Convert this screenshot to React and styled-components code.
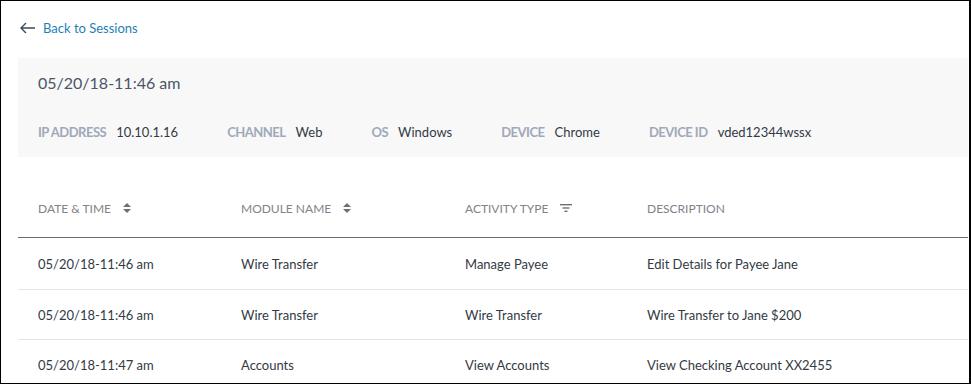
import styled, { createGlobalStyle } from 'styled-components'

const GlobalStyle = createGlobalStyle`
    body {
        margin: 0;
        background: #fff;
        font-family: Lato, "Open Sans", sans-serif;
    }
`

const info = [
    { label: 'IP ADDRESS', value: '10.10.1.16' },
    { label: 'CHANNEL', value: 'Web' },
    { label: 'OS', value: 'Windows' },
    { label: 'DEVICE', value: 'Chrome' },
    { label: 'DEVICE ID', value: 'vded12344wssx' },
]

const columns = [
    { title: 'DATE & TIME', icon: 'sort' },
    { title: 'MODULE NAME', icon: 'sort' },
    { title: 'ACTIVITY TYPE', icon: 'filter' },
    { title: 'DESCRIPTION' },
]

const rows = [
    ['05/20/18-11:46 am', 'Wire Transfer', 'Manage Payee', 'Edit Details for Payee Jane'],
    ['05/20/18-11:46 am', 'Wire Transfer', 'Wire Transfer', 'Wire Transfer to Jane $200'],
    ['05/20/18-11:47 am', 'Accounts', 'View Accounts', 'View Checking Account XX2455'],
]

const SortIcon = () => (
    <svg width="8" height="10" viewBox="0 0 8 10">
        <path d="M4 0 L8 4 H0 Z" fill="#6b6f76" />
        <path d="M0 6 H8 L4 10 Z" fill="#6b6f76" />
    </svg>
)

const FilterIcon = () => (
    <svg width="12" height="8" viewBox="0 0 12 8">
        <rect x="0" y="0" width="12" height="1.4" fill="#6b6f76" />
        <rect x="2.5" y="3.3" width="7" height="1.4" fill="#6b6f76" />
        <rect x="4.5" y="6.6" width="3" height="1.4" fill="#6b6f76" />
    </svg>
)

const BackArrow = () => (
    <svg width="16" height="12" viewBox="0 0 16 12">
        <path d="M6 1 L1 6 L6 11 M1 6 H15" fill="none" stroke="#3d4b5c" strokeWidth="1.4" />
    </svg>
)

const App = () => {
    return (
        <Frame>
            <GlobalStyle />
            <BackLink>
                <BackArrow />
                <span>Back to Sessions</span>
            </BackLink>
            <Panel>
                <SessionTitle>05/20/18-11:46 am</SessionTitle>
                <InfoRow>
                    {info.map(i => (
                        <InfoItem key={i.label}>
                            <InfoLabel>{i.label}</InfoLabel>
                            <InfoValue>{i.value}</InfoValue>
                        </InfoItem>
                    ))}
                </InfoRow>
            </Panel>
            <Table>
                <HeadRow>
                    {columns.map(c => (
                        <HeadCell key={c.title}>
                            {c.title}
                            {c.icon === 'sort' && <SortIcon />}
                            {c.icon === 'filter' && <FilterIcon />}
                        </HeadCell>
                    ))}
                </HeadRow>
                {rows.map((r, i) => (
                    <Row key={i}>
                        {r.map((cell, j) => <Cell key={j}>{cell}</Cell>)}
                    </Row>
                ))}
            </Table>
        </Frame>
    )
}

const Frame = styled.div`
    width: 971px;
    height: 384px;
    box-sizing: border-box;
    border: 1px solid #000;
    border-right-width: 2px;
    padding: 0 1px 0 17px;
    overflow: hidden;
`

const BackLink = styled.a`
    display: flex;
    align-items: center;
    gap: 7px;
    height: 53px;
    margin-bottom: 4px;
    padding-left: 2px;
    color: #1f7fb3;
    font-size: 13px;
    cursor: pointer;
    svg {
        margin-top: 1px;
    }
`

const Panel = styled.div`
    background: #f8f8f9;
    height: 99px;
    padding: 0 20px;
    box-sizing: border-box;
    display: flex;
    flex-direction: column;
`

const SessionTitle = styled.div`
    font-size: 16px;
    color: #4a5566;
    height: 48px;
    display: flex;
    align-items: center;
`

const InfoRow = styled.div`
    display: flex;
    gap: 49px;
    height: 51px;
    align-items: center;
`

const InfoItem = styled.div`
    display: flex;
    align-items: baseline;
    gap: 10px;
`

const InfoLabel = styled.span`
    font-size: 13px;
    font-weight: 700;
    letter-spacing: -0.5px;
    color: #9ea9ba;
`

const InfoValue = styled.span`
    font-size: 13px;
    color: #333a45;
`

const Table = styled.div`
    display: flex;
    flex-direction: column;
`

const grid = `
    display: grid;
    grid-template-columns: 203px 224px 182px 1fr;
`

const HeadRow = styled.div`
    ${grid};
    height: 81px;
    align-items: center;
    border-bottom: 1px solid #6e6e6e;
    padding-top: 22px;
    box-sizing: border-box;
`

const HeadCell = styled.div`
    display: flex;
    align-items: center;
    gap: 12px;
    padding-left: 20px;
    font-size: 12px;
    color: #808389;
`

const Row = styled.div`
    ${grid};
    height: 50px;
    align-items: center;
    border-bottom: 1px solid #e2e5ea;
    box-sizing: border-box;
    &:nth-child(2) {
        height: 52px;
    }
`

const Cell = styled.div`
    padding-left: 20px;
    font-size: 13px;
    color: #333a45;
`

export default App
